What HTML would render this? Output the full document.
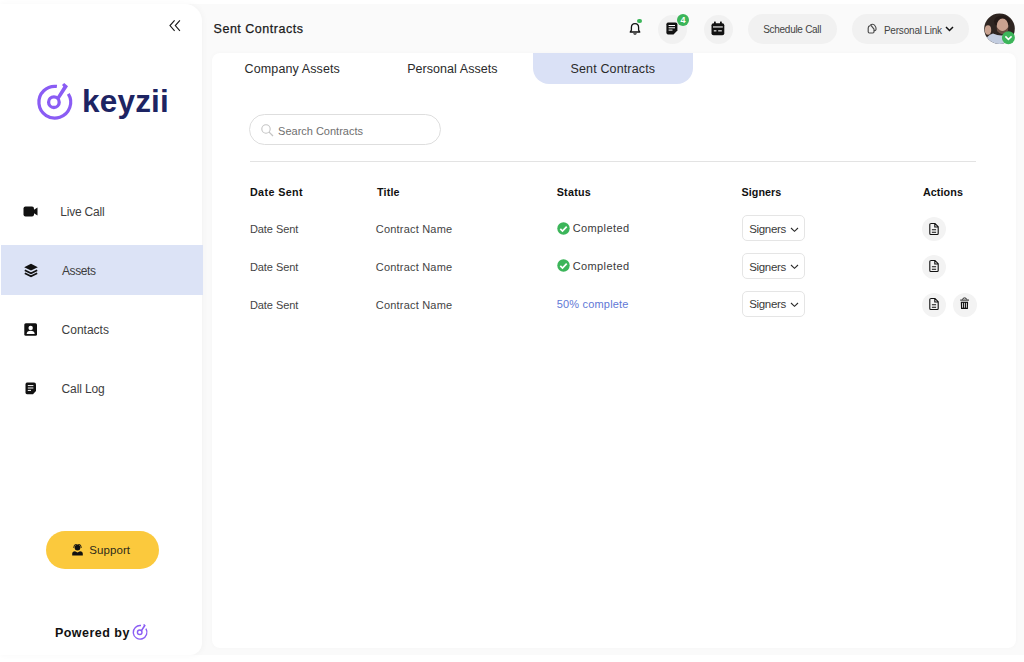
<!DOCTYPE html>
<html><head><meta charset="utf-8">
<style>
*{box-sizing:border-box;margin:0;padding:0}
html,body{width:1024px;height:662px;overflow:hidden;background:#fff;font-family:"Liberation Sans",sans-serif;color:#222}
.abs{position:absolute}
.tx{position:absolute;line-height:1;white-space:nowrap}
#app{position:absolute;left:0;top:4px;width:1024px;height:651px;background:#fafafa}
#side{position:absolute;left:0;top:4px;width:202px;height:651px;background:#fff;border-radius:0 17px 12px 0;box-shadow:1px 0 6px rgba(0,0,0,0.035)}
#card{position:absolute;left:211.5px;top:53.3px;width:804px;height:594.7px;background:#fff;border-radius:8px;box-shadow:0 0 5px rgba(0,0,0,0.025)}
.circ{position:absolute;top:14.5px;width:29px;height:29px;border-radius:50%;background:#f1f1f1}
.pill{position:absolute;top:13.8px;height:30px;border-radius:15px;background:#f1f1f1}
.sel{position:absolute;left:742px;width:63px;height:26px;border:1px solid #e5e5e5;border-radius:5px;background:#fff}
.act{position:absolute;width:24px;height:24px;border-radius:50%;background:#f3f3f3}
</style></head>
<body>
<div id="app"></div>
<div id="side"></div>
<div id="card"></div>
<svg class="abs" style="left:166px;top:17px" width="18" height="18" viewBox="0 0 18 18"><path d="M8.6 3.4 L4 8.6 L8.6 13.8 M13.9 3.4 L9.3 8.6 L13.9 13.8" fill="none" stroke="#1a1a1a" stroke-width="1.15"/></svg>
<svg class="abs" style="left:0;top:0" width="200" height="140" viewBox="0 0 200 140"><path d="M56.9 86.44 A15.9 15.9 0 1 0 68.3 93.8" fill="none" stroke="#8a5cf4" stroke-width="3.2"/>
<circle cx="53.9" cy="102.2" r="5.3" fill="none" stroke="#8a5cf4" stroke-width="3.3"/>
<path d="M59.6 99 L68 86.2 L64.2 83 L62 84.9 L63.3 86.4 L56.5 97.6 Z" fill="#8a5cf4"/></svg>
<div class="tx" style="left:82.00px;top:85.60px;font-size:31.5px;letter-spacing:0.2px;font-weight:bold;color:#1d2463;">keyzii</div>
<div class="abs" style="left:1px;top:245px;width:201.5px;height:50px;background:#dce3f6"></div>
<svg class="abs" style="left:23px;top:205px" width="16" height="13" viewBox="0 0 16 13"><rect x="0.5" y="1.5" width="10.5" height="10" rx="2" fill="#111"/><path d="M10.5 5 L14.5 2.5 V10.5 L10.5 8Z" fill="#111"/></svg>
<svg class="abs" style="left:23px;top:263px" width="16" height="15" viewBox="0 0 16 15"><path d="M8 0.8 L14.8 4.2 L8 7.6 L1.2 4.2Z" fill="#111"/><path d="M1.8 7.2 L8 10.3 L14.2 7.2" fill="none" stroke="#111" stroke-width="1.7"/><path d="M1.8 10.2 L8 13.3 L14.2 10.2" fill="none" stroke="#111" stroke-width="1.7"/></svg>
<svg class="abs" style="left:24px;top:323px" width="14" height="14" viewBox="0 0 14 14"><rect x="0.3" y="0.3" width="12.7" height="12.5" rx="1.5" fill="#111"/><circle cx="6.65" cy="4.9" r="2.2" fill="#fff"/><path d="M2.6 11 Q3 7.8 6.65 7.8 Q10.3 7.8 10.7 11Z" fill="#fff"/></svg>
<svg class="abs" style="left:25px;top:382px" width="12" height="13" viewBox="0 0 12 13"><path d="M2 0.5 H9 Q11 0.5 11 2.5 V9 L8 12.3 H2 Q0.5 12.3 0.5 10.5 V2.5 Q0.5 0.5 2 0.5Z" fill="#111"/><path d="M2.8 3.6 H8.4 M2.8 6 H8.4 M2.8 8.4 H6" stroke="#fff" stroke-width="1"/></svg>
<div class="tx" style="left:60.20px;top:206.30px;font-size:12.0px;letter-spacing:-0.2px;font-weight:normal;color:#3d3d3d;">Live Call</div>
<div class="tx" style="left:62.00px;top:265.20px;font-size:12.0px;letter-spacing:-0.4px;font-weight:normal;color:#3d3d3d;">Assets</div>
<div class="tx" style="left:61.60px;top:324.00px;font-size:12.0px;letter-spacing:-0.0px;font-weight:normal;color:#3d3d3d;">Contacts</div>
<div class="tx" style="left:61.60px;top:383.00px;font-size:12.0px;letter-spacing:-0.14px;font-weight:normal;color:#3d3d3d;">Call Log</div>
<div class="abs" style="left:46px;top:531px;width:113px;height:38px;border-radius:19px;background:#fbc93d"></div>
<svg class="abs" style="left:72px;top:544px" width="11" height="12" viewBox="0 0 11 12"><circle cx="5.5" cy="3.6" r="2.9" fill="#111"/><path d="M1.6 3.8 Q1.6 0 5.5 0 Q9.4 0 9.4 3.8" fill="none" stroke="#111" stroke-width="0.9"/><path d="M0.2 11.5 V9.8 Q0.2 7.4 3 7.2 L5.5 8.6 L8 7.2 Q10.8 7.4 10.8 9.8 V11.5Z" fill="#111"/></svg>
<div class="tx" style="left:89.30px;top:545.00px;font-size:11.5px;letter-spacing:0.08px;font-weight:normal;color:#2e2a1a;">Support</div>
<div class="tx" style="left:54.90px;top:626.70px;font-size:12.5px;letter-spacing:0.48px;font-weight:bold;color:#111;">Powered by</div>
<svg class="abs" style="left:0;top:0" width="200" height="662" viewBox="0 0 200 662"><g transform="translate(140.1 632.3) scale(0.43) translate(-54.8 -102.2)"><path d="M56.9 86.44 A15.9 15.9 0 1 0 68.3 93.8" fill="none" stroke="#8a5cf4" stroke-width="3.2"/>
<circle cx="53.9" cy="102.2" r="5.3" fill="none" stroke="#8a5cf4" stroke-width="3.3"/>
<path d="M59.6 99 L68 86.2 L64.2 83 L62 84.9 L63.3 86.4 L56.5 97.6 Z" fill="#8a5cf4"/></g></svg>
<div class="tx" style="left:213.60px;top:23.10px;font-size:12.5px;letter-spacing:0.51px;font-weight:normal;color:#1a1a1a;-webkit-text-stroke:0.25px #1a1a1a">Sent Contracts</div>
<svg class="abs" style="left:628px;top:21px" width="14" height="15" viewBox="0 0 14 15"><path d="M7 2.6 C4.6 2.6 3.4 4.4 3.4 6.6 V9.2 L2.2 11 H11.8 L10.6 9.2 V6.6 C10.6 4.4 9.4 2.6 7 2.6Z" fill="none" stroke="#111" stroke-width="1.3" stroke-linejoin="round"/><path d="M5.6 12.3 Q7 14 8.4 12.3" fill="none" stroke="#111" stroke-width="1.2"/></svg>
<div class="abs" style="left:637.4px;top:18.8px;width:4.5px;height:4.5px;border-radius:50%;background:#3cb55a"></div>
<div class="circ" style="left:657.5px"></div>
<svg class="abs" style="left:666px;top:22px" width="12" height="13" viewBox="0 0 12 13"><path d="M2 0.6 H9.5 Q11.4 0.6 11.4 2.5 V8.5 L7.5 12.4 H2 Q0.4 12.4 0.4 10.8 V2.2 Q0.4 0.6 2 0.6Z" fill="#111"/><path d="M2.6 3.5 H9 M2.6 5.8 H9 M2.6 8.1 H6.5" stroke="#fff" stroke-width="1"/></svg>
<div class="abs" style="left:677px;top:14px;width:12px;height:12px;border-radius:50%;background:#3cb55a"></div>
<div class="tx" style="left:680.5px;top:16px;font-size:9px;font-weight:bold;color:#fff">4</div>
<div class="circ" style="left:703.5px"></div>
<svg class="abs" style="left:711px;top:21px" width="14" height="15" viewBox="0 0 14 15"><rect x="0.5" y="2.3" width="12.8" height="12" rx="2" fill="#111"/><rect x="3" y="0.6" width="1.8" height="3.4" rx="0.5" fill="#111"/><rect x="9" y="0.6" width="1.8" height="3.4" rx="0.5" fill="#111"/><rect x="2" y="5.4" width="9.8" height="1.1" fill="#fff"/><rect x="2.8" y="9.3" width="2.6" height="1.1" fill="#fff"/><rect x="7.2" y="9.3" width="3.6" height="1.1" fill="#fff"/></svg>
<div class="pill" style="left:748px;width:89px"></div>
<div class="tx" style="left:763.20px;top:25.30px;font-size:10.0px;letter-spacing:-0.28px;font-weight:normal;color:#444;">Schedule Call</div>
<div class="pill" style="left:852px;width:117px"></div>
<svg class="abs" style="left:862px;top:18px" width="20" height="20" viewBox="0 0 20 20"><path d="M8.2 7.6 Q6.2 8 6.2 10 V13.8 Q6.2 15 7.4 15 H10.8 Q12 15 12 13.8 V11.2 L8.6 6.8 Q9.2 6.2 10.6 6.2 Q12 6.2 13 7.8 Q14.2 9.6 14.1 11.2 Q14 12.6 12 13" fill="none" stroke="#4a4a4a" stroke-width="1.15" stroke-linejoin="round"/></svg>
<div class="tx" style="left:883.90px;top:25.50px;font-size:10.0px;letter-spacing:-0.2px;font-weight:normal;color:#444;">Personal Link</div>
<svg class="abs" style="left:945px;top:26px" width="9" height="6" viewBox="0 0 9 6"><path d="M1 1 L4.5 4.5 L8 1" fill="none" stroke="#111" stroke-width="1.5"/></svg>
<svg class="abs" style="left:984px;top:13px" width="32" height="32" viewBox="0 0 32 32">
<defs><clipPath id="av"><circle cx="15.5" cy="15.7" r="15.3"/></clipPath></defs>
<g clip-path="url(#av)"><rect width="32" height="32" fill="#2e2521"/>
<ellipse cx="4" cy="17" rx="3.2" ry="4.8" fill="#c9a391"/>
<ellipse cx="18" cy="8.5" rx="8" ry="6" fill="#241a17"/>
<ellipse cx="18.5" cy="13" rx="5.8" ry="7.5" fill="#c9a290"/>
<path d="M12.8 14 Q18.5 22 24.2 14 L24 18 Q18.5 24.5 13 18Z" fill="#6a4e42"/>
<path d="M0 32 Q2 22 9 20.5 Q17 24 24 21 Q31 23 32 32Z" fill="#c3cde0"/>
</g></svg>
<svg class="abs" style="left:1001px;top:30px" width="16" height="16" viewBox="0 0 16 16"><circle cx="7.4" cy="7.7" r="6.5" fill="#3cb55a"/><path d="M4.4 6.4 L7.4 9.4 L10.6 6.4" fill="none" stroke="#fff" stroke-width="1.5"/></svg>
<div class="abs" style="left:533px;top:53.3px;width:160px;height:30.4px;background:#dae1f6;border-radius:0 0 16px 16px"></div>
<div class="tx" style="left:244.60px;top:63.20px;font-size:12.5px;letter-spacing:0.11px;font-weight:normal;color:#2a2a2a;">Company Assets</div>
<div class="tx" style="left:407.20px;top:62.60px;font-size:12.5px;letter-spacing:0.05px;font-weight:normal;color:#2a2a2a;">Personal Assets</div>
<div class="tx" style="left:570.50px;top:63.20px;font-size:12.5px;letter-spacing:0.14px;font-weight:normal;color:#2a2a2a;">Sent Contracts</div>
<div class="abs" style="left:249px;top:114.2px;width:192px;height:31px;border:1px solid #dedede;border-radius:16px"></div>
<svg class="abs" style="left:260px;top:123px" width="15" height="15" viewBox="0 0 15 15"><circle cx="6" cy="6" r="4.2" fill="none" stroke="#c4c4c4" stroke-width="1.1"/><path d="M9.1 9.1 L13 13" stroke="#c4c4c4" stroke-width="1.3"/></svg>
<div class="tx" style="left:278.10px;top:126.00px;font-size:11.0px;letter-spacing:-0.01px;font-weight:normal;color:#6f6f6f;">Search Contracts</div>
<div class="abs" style="left:250px;top:160.5px;width:726px;height:1.5px;background:#e3e3e3"></div>
<div class="tx" style="left:249.90px;top:186.80px;font-size:10.75px;letter-spacing:0.39px;font-weight:bold;color:#111;">Date Sent</div>
<div class="tx" style="left:377.00px;top:186.80px;font-size:10.75px;letter-spacing:0.17px;font-weight:bold;color:#111;">Title</div>
<div class="tx" style="left:556.70px;top:186.80px;font-size:10.75px;letter-spacing:0.26px;font-weight:bold;color:#111;">Status</div>
<div class="tx" style="left:741.60px;top:186.80px;font-size:10.75px;letter-spacing:0.03px;font-weight:bold;color:#111;">Signers</div>
<div class="tx" style="left:922.90px;top:186.50px;font-size:10.75px;letter-spacing:0.1px;font-weight:bold;color:#111;">Actions</div>
<div class="tx" style="left:249.90px;top:224.30px;font-size:11.0px;letter-spacing:-0.05px;font-weight:normal;color:#444;">Date Sent</div>
<div class="tx" style="left:375.80px;top:224.30px;font-size:11.0px;letter-spacing:0.2px;font-weight:normal;color:#444;">Contract Name</div>
<svg class="abs" style="left:557px;top:221.50px" width="13" height="13" viewBox="0 0 13 13"><circle cx="6.5" cy="6.5" r="6.2" fill="#3cb55a"/><path d="M3.3 6.8 L5.5 9 L9.7 4.6" fill="none" stroke="#fff" stroke-width="1.7"/></svg>
<div class="tx" style="left:572.70px;top:223.20px;font-size:11.0px;letter-spacing:0.39px;font-weight:normal;color:#3a3a3a;">Completed</div>
<div class="sel" style="top:215.00px"></div>
<div class="tx" style="left:749.20px;top:223.80px;font-size:11.5px;letter-spacing:-0.33px;font-weight:normal;color:#3a3a3a;">Signers</div>
<svg class="abs" style="left:790px;top:226.70px" width="9" height="6" viewBox="0 0 9 6"><path d="M1 1 L4.5 4.3 L8 1" fill="none" stroke="#2a2a2a" stroke-width="1.15"/></svg>
<div class="act" style="left:922px;top:217.30px"></div>
<svg class="abs" style="left:928px;top:221.70px" width="12" height="14" viewBox="0 0 12 14"><path d="M2.5 1.5 H7 L10.2 4.7 V11.5 Q10.2 12.5 9.2 12.5 H2.8 Q1.8 12.5 1.8 11.5 V2.5 Q1.8 1.5 2.8 1.5Z M6.8 1.5 V5 H10.2 M3.9 7.8 H8.1 M3.9 10.3 H8.1" fill="none" stroke="#111" stroke-width="1.1"/></svg>
<div class="tx" style="left:249.90px;top:262.05px;font-size:11.0px;letter-spacing:-0.05px;font-weight:normal;color:#444;">Date Sent</div>
<div class="tx" style="left:375.80px;top:262.05px;font-size:11.0px;letter-spacing:0.2px;font-weight:normal;color:#444;">Contract Name</div>
<svg class="abs" style="left:557px;top:259.25px" width="13" height="13" viewBox="0 0 13 13"><circle cx="6.5" cy="6.5" r="6.2" fill="#3cb55a"/><path d="M3.3 6.8 L5.5 9 L9.7 4.6" fill="none" stroke="#fff" stroke-width="1.7"/></svg>
<div class="tx" style="left:572.70px;top:261.45px;font-size:11.0px;letter-spacing:0.39px;font-weight:normal;color:#3a3a3a;">Completed</div>
<div class="sel" style="top:252.75px"></div>
<div class="tx" style="left:749.20px;top:261.55px;font-size:11.5px;letter-spacing:-0.33px;font-weight:normal;color:#3a3a3a;">Signers</div>
<svg class="abs" style="left:790px;top:264.45px" width="9" height="6" viewBox="0 0 9 6"><path d="M1 1 L4.5 4.3 L8 1" fill="none" stroke="#2a2a2a" stroke-width="1.15"/></svg>
<div class="act" style="left:922px;top:255.05px"></div>
<svg class="abs" style="left:928px;top:259.45px" width="12" height="14" viewBox="0 0 12 14"><path d="M2.5 1.5 H7 L10.2 4.7 V11.5 Q10.2 12.5 9.2 12.5 H2.8 Q1.8 12.5 1.8 11.5 V2.5 Q1.8 1.5 2.8 1.5Z M6.8 1.5 V5 H10.2 M3.9 7.8 H8.1 M3.9 10.3 H8.1" fill="none" stroke="#111" stroke-width="1.1"/></svg>
<div class="tx" style="left:249.90px;top:299.80px;font-size:11.0px;letter-spacing:-0.05px;font-weight:normal;color:#444;">Date Sent</div>
<div class="tx" style="left:375.80px;top:299.80px;font-size:11.0px;letter-spacing:0.2px;font-weight:normal;color:#444;">Contract Name</div>
<div class="tx" style="left:556.70px;top:299.00px;font-size:11.0px;letter-spacing:0.19px;font-weight:normal;color:#6178d6;">50% complete</div>
<div class="sel" style="top:290.50px"></div>
<div class="tx" style="left:749.20px;top:299.30px;font-size:11.5px;letter-spacing:-0.33px;font-weight:normal;color:#3a3a3a;">Signers</div>
<svg class="abs" style="left:790px;top:302.20px" width="9" height="6" viewBox="0 0 9 6"><path d="M1 1 L4.5 4.3 L8 1" fill="none" stroke="#2a2a2a" stroke-width="1.15"/></svg>
<div class="act" style="left:922px;top:292.80px"></div>
<svg class="abs" style="left:928px;top:297.20px" width="12" height="14" viewBox="0 0 12 14"><path d="M2.5 1.5 H7 L10.2 4.7 V11.5 Q10.2 12.5 9.2 12.5 H2.8 Q1.8 12.5 1.8 11.5 V2.5 Q1.8 1.5 2.8 1.5Z M6.8 1.5 V5 H10.2 M3.9 7.8 H8.1 M3.9 10.3 H8.1" fill="none" stroke="#111" stroke-width="1.1"/></svg>
<div class="act" style="left:953px;top:292.80px"></div>
<svg class="abs" style="left:959px;top:296.90px" width="12" height="14" viewBox="0 0 12 14"><path d="M3.4 2.6 Q3.7 0.9 5.6 0.9 Q7.5 0.9 7.8 2.6" fill="none" stroke="#111" stroke-width="0.9"/><path d="M1.2 3.1 H10" stroke="#111" stroke-width="0.95"/><path d="M1.8 4.7 H9.1 L8.9 12.1 H2.0Z" fill="#111"/><path d="M3.5 5.9 V10.7 M5.45 5.9 V10.7 M7.45 5.9 V10.7" stroke="#f3f3f3" stroke-width="0.85"/></svg>
</body></html>
